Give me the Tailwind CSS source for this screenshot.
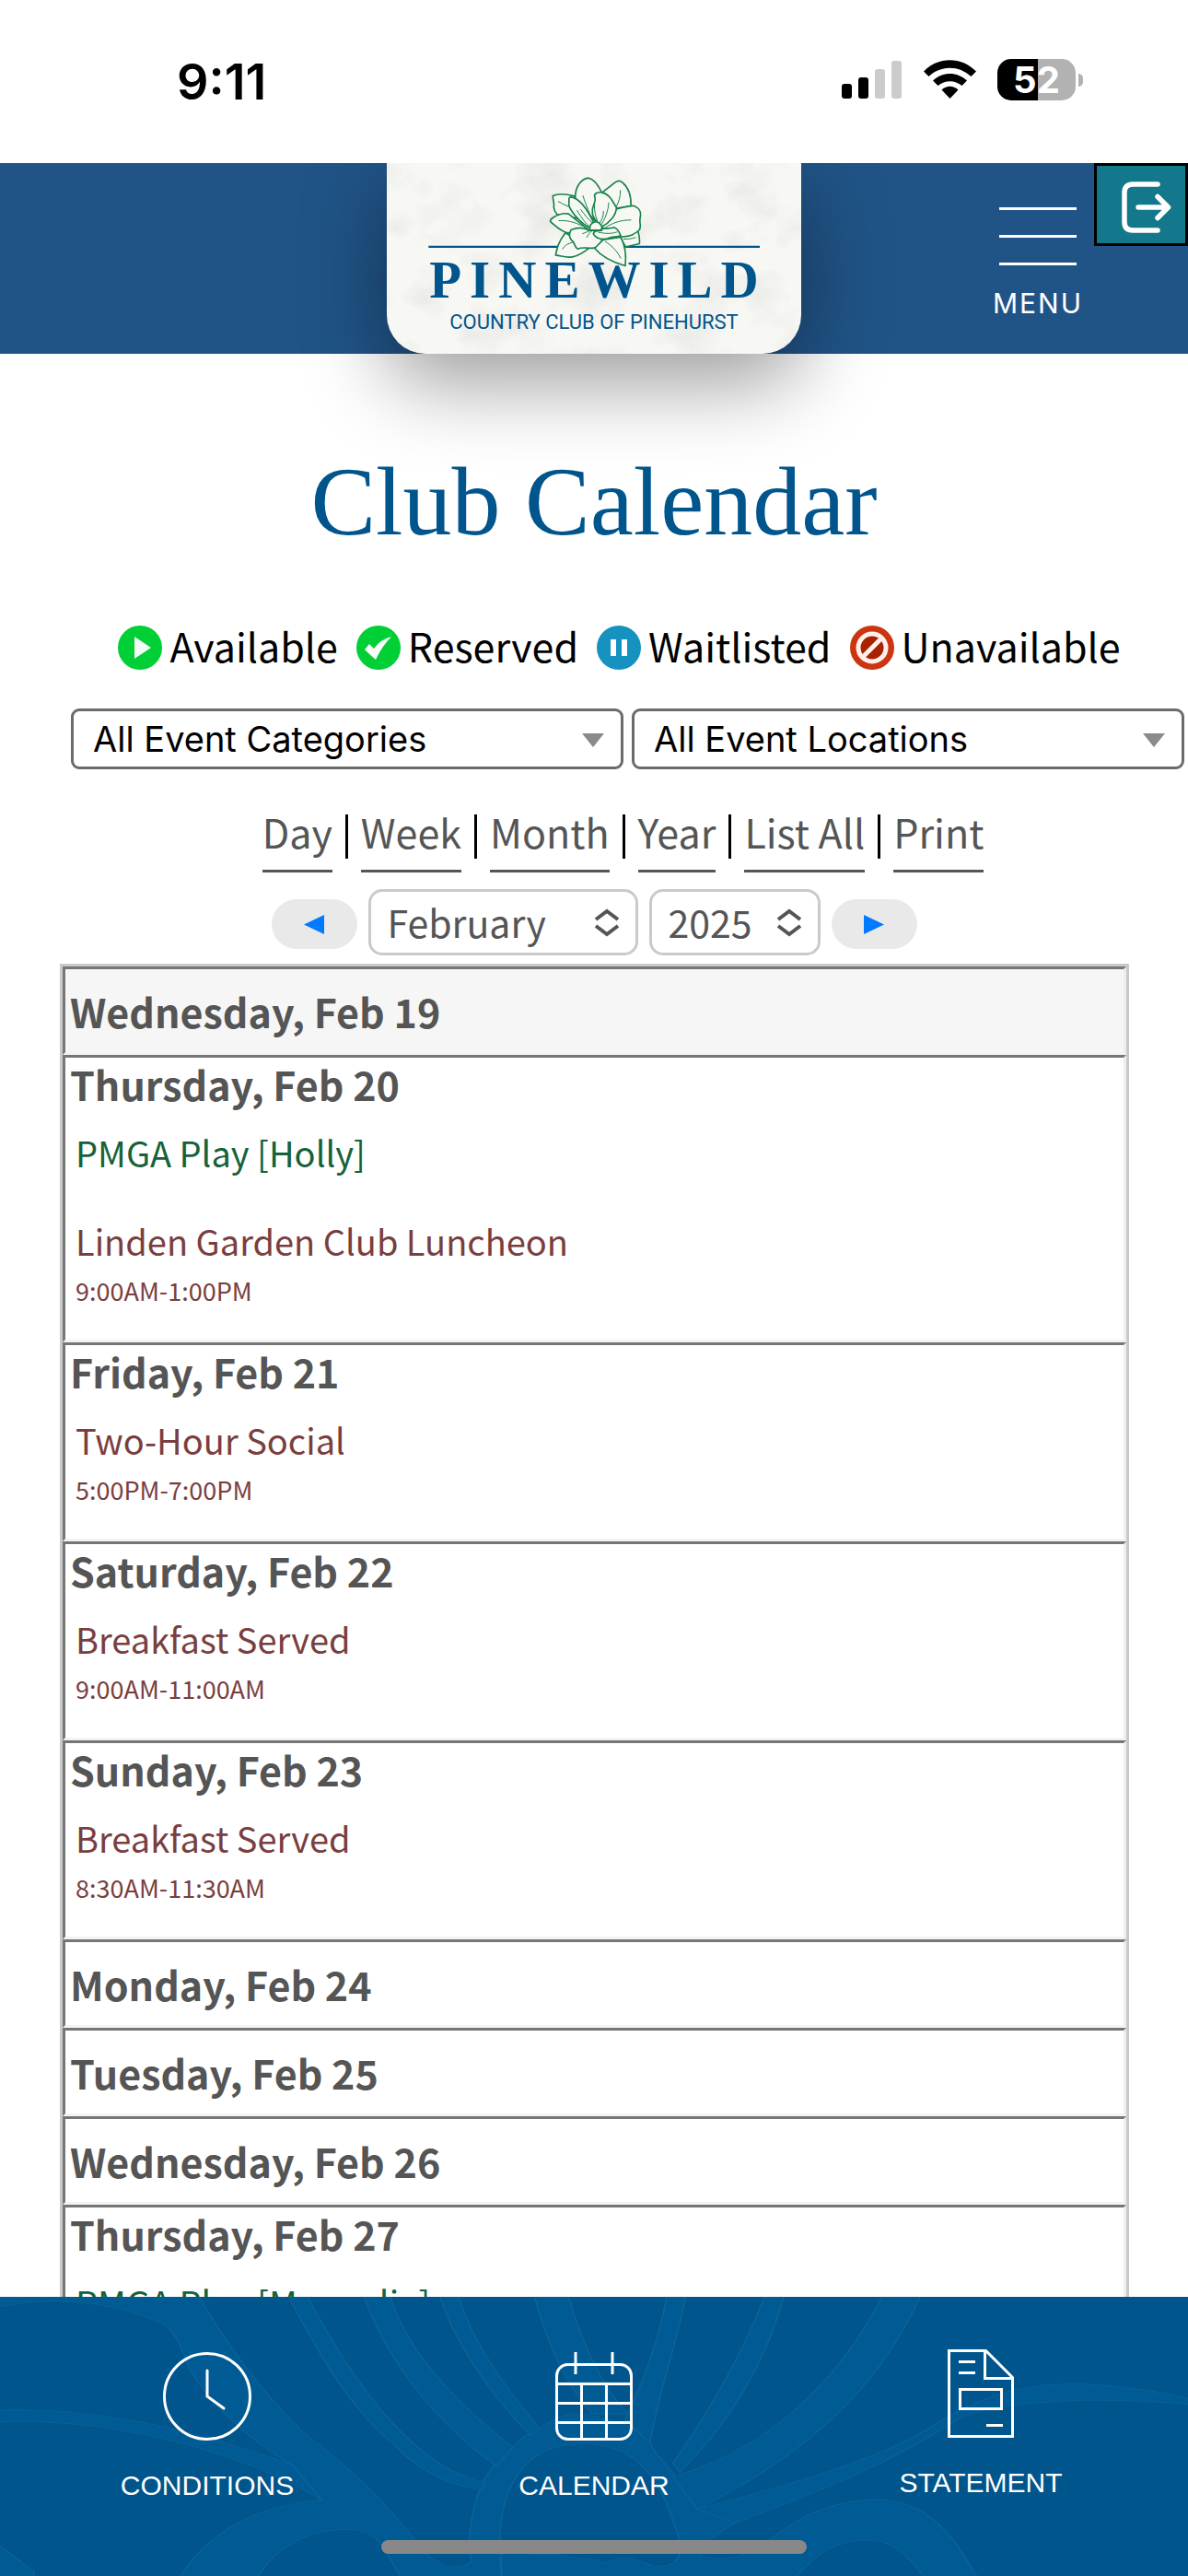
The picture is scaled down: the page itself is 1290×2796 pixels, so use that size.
<!DOCTYPE html>
<html lang="en">
<head>
<meta charset="utf-8">
<title>Club Calendar</title>
<meta name="viewport" content="width=device-width, initial-scale=1">
<script src="https://cdn.jsdelivr.net/npm/@tailwindcss/browser@4"></script>
</head>
<body class="flex h-screen flex-col overflow-hidden bg-white font-['Noto_Sans_CJK_SC','Open_Sans',sans-serif] text-[#555555]">

<!-- Status bar -->
<div class="relative z-10 flex h-[177px] shrink-0 items-start justify-between bg-white pt-[62px] pr-[114px] pl-[192px] font-['Inter',sans-serif] text-black">
  <span class="text-[54px] leading-[54px] font-semibold">9:11</span>
  <div class="flex items-start gap-[23px] pt-[2px]">
    <svg class="mt-[2px] h-[42px] w-[66px]" viewBox="0 0 66 42" aria-hidden="true">
      <rect x="0" y="25" width="11" height="16" rx="3"/><rect x="18" y="18" width="11" height="23" rx="3"/>
      <rect x="36" y="9" width="11" height="32" rx="3" fill="#cbcbcb"/><rect x="54" y="0" width="11" height="41" rx="3" fill="#cbcbcb"/>
    </svg>
    <svg class="mt-[1px] h-[42px] w-[57px]" viewBox="0 0 57 42" aria-hidden="true">
      <path d="M0 12.500C16-4 41-4 57 12.500L51.500 18C38 5.500 19 5.500 5.500 18Z"/>
      <path d="M10 22.500C20.500 12.500 36.500 12.500 47 22.500L41.500 28C34 21.500 23 21.500 15.500 28Z"/>
      <path d="M19.500 32.500C25 27.500 32 27.500 37.500 32.500L28.500 42Z"/>
    </svg>
    <div class="flex items-center gap-[3px]">
      <div class="flex h-[45px] w-[85px] items-center justify-center rounded-[15px] bg-linear-to-r from-black from-52% to-[#b2b2b2] to-52% text-[40px] leading-[45px] font-bold text-white">52</div>
      <div class="h-[14px] w-[5px] rounded-r-full bg-[#b2b2b2]"></div>
    </div>
  </div>
</div>

<!-- Site header -->
<header class="relative flex h-[207px] shrink-0 items-start justify-center bg-[#205487]">
  <a href="#" aria-label="Pinewild Country Club of Pinehurst" class="relative flex h-[207px] w-[450px] flex-col items-center overflow-hidden rounded-b-[42px] bg-[#f7f8f4] pt-[98px] text-[#00558c] shadow-[0_30px_90px_rgba(0,0,0,0.4)]">
    <svg class="absolute inset-0 h-full w-full" viewBox="60 21 1350 620" fill="none" aria-hidden="true">
      <filter id="paper" x="0" y="0" width="100%" height="100%"><feTurbulence type="fractalNoise" baseFrequency="0.006 0.008" numOctaves="4" seed="4"/><feColorMatrix values="0 0 0 0 0.6  0 0 0 0 0.6  0 0 0 0 0.58  1.400 0 0 0 -0.620"/></filter>
      <rect x="60" y="21" width="1350" height="620" filter="url(#paper)" opacity=".5"/>
      <path d="M196 293H1275" stroke="#00558c" stroke-width="7"/>
      <g stroke="#17834a" stroke-width="5" stroke-linejoin="round" stroke-linecap="round" fill="#f7f8f4">
        <path d="M642 248C620 275 615 295 610 320C630 322 640 330 665 326C690 322 710 305 722 295Z"/>
        <path d="M878 242C885 265 884 270 883 283C865 288 850 290 838 293L820 262Z"/>
        <path d="M762 116C775 105 790 95 800 86C812 76 820 76 827 83C845 98 857 120 855 160L808 168Z"/>
        <path d="M672 128C640 120 615 120 601 127C600 140 607 148 604 165C605 175 610 182 615 188L680 200Z"/>
        <path d="M674 140C672 100 690 75 715 69C740 72 755 105 762 120L740 210Z"/>
        <path d="M652 186C635 182 615 190 605 196C597 202 590 205 593 211C610 225 625 242 650 248L720 240Z"/>
        <path d="M808 170C835 165 850 158 865 160C885 168 890 180 885 200C882 215 890 225 883 238C865 255 840 262 820 260L760 230Z"/>
        <path d="M760 228C785 215 808 190 808 165C795 145 785 120 760 116C745 115 735 120 737 130C745 145 728 160 730 175C728 190 738 205 745 212Z"/>
        <path d="M722 232C690 215 660 180 653 158C655 145 650 130 660 131C690 135 715 175 733 212Z"/>
        <path d="M720 240C700 228 680 230 660 238C652 255 655 262 662 272C675 280 670 295 682 300C700 292 715 300 735 297C755 295 762 285 760 270L735 240Z"/>
        <path d="M737 298C760 325 800 345 837 355C840 325 838 290 822 262L765 270Z"/>
        <path d="M722 238C718 220 735 208 748 213C760 222 765 232 757 239Z"/>
        <path d="M760 235C780 232 790 235 800 230C815 235 818 248 822 258C805 262 790 260 780 266C760 272 738 265 733 250C735 240 750 240 760 240Z"/>
        <g stroke-width="3" fill="none">
          <path d="M699 127C710 160 720 185 732 208M821 110C822 130 815 148 808 162M619 146C632 152 640 158 652 162M621 208C645 206 670 212 700 226M680 175C695 200 710 220 722 228M692 172C705 190 718 205 728 214M672 190C690 210 705 222 720 232M737 150C735 175 740 195 746 208M783 150C782 175 770 205 758 222M766 178C766 195 760 205 754 216M855 206C820 205 790 218 770 232M633 300C640 288 650 282 668 278M772 276C795 290 812 310 822 330M870 263C855 268 845 268 832 268M712 262C716 252 722 245 728 242M698 250C708 246 715 244 724 240M810 245C790 252 770 250 750 246"/>
        </g>
      </g>
    </svg>
    <span class="relative pl-[9px] font-['Liberation_Serif',serif] text-[57px] leading-[57px] font-bold tracking-[9px]">PINEWILD</span>
    <span class="relative mt-[6px] font-['Roboto',sans-serif] text-[22px] leading-6">COUNTRY CLUB OF PINEHURST</span>
  </a>
  <button class="absolute top-12 right-[114px] flex flex-col items-center font-['Inter',sans-serif] text-white" type="button">
    <span class="flex flex-col gap-[27px]">
      <span class="h-[3px] w-[84px] bg-white"></span>
      <span class="h-[3px] w-[84px] bg-white"></span>
      <span class="h-[3px] w-[84px] bg-white"></span>
    </span>
    <span class="mt-[23px] text-[30px] leading-9 tracking-[2px]">MENU</span>
  </button>
  <button type="button" aria-label="Log out" class="absolute top-0 right-0 flex h-[90px] w-[102px] items-center justify-center border-[3px] border-black bg-[#14788c] pt-[6px] pl-[12px]">
    <svg class="h-[56px] w-[54px]" viewBox="0 0 54 56" fill="none" stroke="#fff" stroke-width="5.500" stroke-linecap="round" stroke-linejoin="round" aria-hidden="true"><path d="M39 3H12Q3 3 3 12V44Q3 53 12 53H39M18 28H50M39 16.500L50.500 28L39 39.500"/></svg>
  </button>
</header>

<!-- Calendar -->
<main class="min-h-0 flex-1 overflow-hidden">
  <h1 class="mt-[101px] text-center font-['Liberation_Serif',serif] text-[106px] leading-[120px] text-[#00558c]">Club Calendar</h1>

  <ul class="mt-[62px] ml-[55px] flex h-[66px] items-center justify-center gap-5 text-[43px] leading-[66px] text-black">
    <li class="flex items-center gap-2">
      <svg class="mt-[6px] h-12 w-12" viewBox="0 0 48 48" aria-hidden="true"><circle cx="24" cy="24" r="24" fill="#00cf35"/><path d="M18 12L36 24L18 36Z" fill="#f2fbf4"/></svg>Available</li>
    <li class="flex items-center gap-2">
      <svg class="mt-[6px] h-12 w-12" viewBox="0 0 48 48" aria-hidden="true"><circle cx="24" cy="24" r="24" fill="#00cf35"/><path d="M9 26L14 20L19 25Q26 15 38 12Q28 22 21 37Q15 32 9 26Z" fill="#f8fdf9"/></svg>Reserved</li>
    <li class="flex items-center gap-2">
      <svg class="mt-[6px] h-12 w-12" viewBox="0 0 48 48" aria-hidden="true"><circle cx="24" cy="24" r="24" fill="#1592c0"/><path d="M15 15H21V33H15ZM27 15H33V33H27Z" fill="#fff"/></svg>Waitlisted</li>
    <li class="flex items-center gap-2">
      <svg class="mt-[6px] h-12 w-12" viewBox="0 0 48 48" fill="none" aria-hidden="true"><circle cx="24" cy="24" r="24" fill="#cb3510"/><circle cx="24" cy="24" r="15" fill="#a82200" stroke="#fff0ec" stroke-width="5"/><path d="M15 33L33 15" stroke="#fff0ec" stroke-width="5"/></svg>Unavailable</li>
  </ul>

  <div class="mt-[36px] ml-[77px] flex gap-[9px] pr-1 font-['Inter',sans-serif] text-[38px] text-black">
    <div class="relative flex-1">
      <select aria-label="Event category" class="h-[66px] w-full appearance-none rounded-[9px] border-[3px] border-[#6b6b6b] bg-white pl-[21px]"><option>All Event Categories</option></select>
      <svg class="pointer-events-none absolute top-[27px] right-[21px] h-[15px] w-6" viewBox="0 0 24 15" aria-hidden="true"><path d="M0 0H24L12 15Z" fill="#8a8a8a"/></svg>
    </div>
    <div class="relative flex-1">
      <select aria-label="Event location" class="h-[66px] w-full appearance-none rounded-[9px] border-[3px] border-[#6b6b6b] bg-white pl-[21px]"><option>All Event Locations</option></select>
      <svg class="pointer-events-none absolute top-[27px] right-[21px] h-[15px] w-6" viewBox="0 0 24 15" aria-hidden="true"><path d="M0 0H24L12 15Z" fill="#8a8a8a"/></svg>
    </div>
  </div>

  <nav aria-label="Calendar view" class="mt-[25px] ml-[63px] flex justify-center gap-[14px] text-[43px] leading-[84px]">
    <a href="#" class="border-b-[3px] border-[#555555]">Day</a><span class="mt-6 mb-[15px] w-[3px] bg-black"></span>
    <a href="#" class="border-b-[3px] border-[#555555]">Week</a><span class="mt-6 mb-[15px] w-[3px] bg-black"></span>
    <a href="#" class="border-b-[3px] border-[#555555]">Month</a><span class="mt-6 mb-[15px] w-[3px] bg-black"></span>
    <a href="#" class="border-b-[3px] border-[#555555]">Year</a><span class="mt-6 mb-[15px] w-[3px] bg-black"></span>
    <a href="#" class="border-b-[3px] border-[#555555]">List All</a><span class="mt-6 mb-[15px] w-[3px] bg-black"></span>
    <a href="#" class="border-b-[3px] border-[#555555]">Print</a>
  </nav>

  <div class="mt-[18px] flex items-center justify-center gap-3 text-[41px]">
    <button type="button" aria-label="Previous month" class="mt-1 flex h-[54px] w-[93px] items-center justify-center rounded-full bg-[#e9e9e9]"><svg class="h-[21px] w-[22px]" viewBox="0 0 22 21" aria-hidden="true"><path d="M0 10.500L22 0V21Z" fill="#007aff"/></svg></button>
    <div class="relative">
      <select aria-label="Month" class="h-[72px] w-[293px] appearance-none rounded-[15px] border-[3px] border-[#cacaca] bg-white pl-[18px]"><option>February</option></select>
      <svg class="pointer-events-none absolute top-[21px] right-[20px] h-[31px] w-[28px]" viewBox="0 0 28 31" fill="none" stroke="#555" stroke-width="4" aria-hidden="true"><path d="M2 12L14 3L26 12M2 19L14 28L26 19"/></svg>
    </div>
    <div class="relative">
      <select aria-label="Year" class="h-[72px] w-[186px] appearance-none rounded-[15px] border-[3px] border-[#cacaca] bg-white pl-[18px]"><option>2025</option></select>
      <svg class="pointer-events-none absolute top-[21px] right-[20px] h-[31px] w-[28px]" viewBox="0 0 28 31" fill="none" stroke="#555" stroke-width="4" aria-hidden="true"><path d="M2 12L14 3L26 12M2 19L14 28L26 19"/></svg>
    </div>
    <button type="button" aria-label="Next month" class="mt-1 flex h-[54px] w-[93px] items-center justify-center rounded-full bg-[#e9e9e9]"><svg class="h-[21px] w-[22px]" viewBox="0 0 22 21" aria-hidden="true"><path d="M22 10.500L0 0V21Z" fill="#007aff"/></svg></button>
  </div>

  <div class="mt-[9px] pr-16 pl-[65px]">
  <table id="days" class="w-full border-separate border-spacing-0 border-[3px] border-[#c9c9c9]">
    <tbody></tbody>
  </table>
  </div>
</main>

<!-- Bottom navigation -->
<footer class="relative h-[303px] shrink-0 overflow-hidden bg-[#00558c] font-['Liberation_Sans',Arial,sans-serif] text-[30px] leading-9 text-white">
  <svg class="absolute inset-0 h-full w-full" viewBox="0 339 1568 909" preserveAspectRatio="none" fill="#005b94" stroke="#12659b" stroke-width="1.500" aria-hidden="true">
    <path d="M262 335C300 500 350 660 400 780C470 910 510 1010 560 1170C585 1230 615 1225 622 1200C615 1120 625 1000 640 930C655 870 665 850 677 830C690 795 700 775 712 768C730 735 745 715 775 722C800 740 835 745 858 815C865 850 875 875 888 910L920 1030C960 1020 990 1010 1020 1000C1010 1030 990 1060 970 1075L935 1130C910 1180 925 1195 960 1190C1020 1175 1040 1010 1155 998C1230 1000 1260 1130 1290 1252H1220C1200 1190 1180 1130 1145 1130C1100 1135 1080 1170 1050 1252H530C510 1190 505 1100 465 1097C400 1090 360 1170 340 1252H238C270 1120 330 1020 425 1000L385 885C310 780 255 620 245 540C235 480 230 450 215 428L160 335Z"/>
    <path d="M425 1000C300 820 130 730 -5 748V708C120 695 240 760 385 885Z"/>
    <path d="M-5 375C60 335 150 350 215 428L262 335H-5Z" stroke="none"/>
    <path d="M-5 375C60 335 150 350 215 428" fill="#00558c"/>
    <path d="M380 335C420 520 460 700 520 820C550 900 590 950 635 968L640 945C540 890 460 590 405 335Z"/>
    <path d="M480 335C510 540 570 740 655 890L677 830C600 680 535 510 515 335Z"/>
    <path d="M580 335C605 520 660 690 700 790L712 768C670 640 625 500 605 335Z"/>
    <path d="M705 335C720 470 745 620 782 722H830C795 640 765 470 750 335Z"/>
    <path d="M880 335C870 480 850 610 825 740L858 815C870 640 895 480 905 335Z"/>
    <path d="M1010 335C980 520 940 700 888 880L897 910C960 760 1010 560 1035 335Z"/>
    <path d="M1165 335C1110 600 1020 830 888 925L920 1030C1060 860 1160 640 1215 335Z"/>
    <path d="M920 1030C1080 930 1180 840 1230 760C1280 680 1340 620 1410 623C1450 620 1520 640 1573 672V690C1440 660 1320 680 1270 730C1180 870 1110 950 970 1075Z"/>
    <path d="M662 1252C650 1000 680 820 768 817C860 815 880 1010 897 1130C900 1200 890 1220 860 1215C840 1190 820 1180 800 1205C770 1180 760 1200 740 1175C720 1180 700 1180 662 1160Z" fill="#00558c"/>
    <path d="M-5 1140L45 1235V1252H-5Z"/>
  </svg>
  <nav aria-label="Main" class="relative grid grid-cols-3 px-[15px] pt-[57px] text-center">
    <a href="#" class="flex flex-col items-center gap-[31px] pt-[3px]">
      <svg class="h-24 w-24" viewBox="0 0 96 96" fill="none" stroke="#fff" stroke-width="3" stroke-linecap="round" aria-hidden="true"><circle cx="48" cy="48" r="46.500"/><path d="M48 20V48L66 61"/></svg>CONDITIONS</a>
    <a href="#" class="flex flex-col items-center gap-[31px] pt-[3px]">
      <svg class="h-24 w-[84px]" viewBox="0 0 84 96" fill="none" stroke="#fff" stroke-width="3" aria-hidden="true"><rect x="1.500" y="13.500" width="81" height="81" rx="12"/><path d="M22 0V24M62 0V24M1 34.500H83M1 55.500H83M1 76.500H83M28.500 35V95M55.500 35V95"/></svg>CALENDAR</a>
    <a href="#" class="flex flex-col items-center gap-[31px]">
      <svg class="h-24 w-[72px]" viewBox="0 0 72 96" fill="none" stroke="#fff" stroke-width="3" aria-hidden="true"><path d="M1.500 1.500H41.500L70.500 30.500V94.500H1.500ZM40.500 1.500V31.500H71M12 13.500H30M12 25.500H30M13.500 43.500H58.500V64.500H13.500ZM42 82.500H60"/></svg>STATEMENT</a>
  </nav>
  <div class="absolute inset-x-0 bottom-6 mx-auto h-[15px] w-[462px] rounded-full bg-[#888888]"></div>
</footer>

<script>
  const GREEN = 'text-[#15623a]';
  const RED = 'text-[#7a3e3e]';
  const days = [
    { date: 'Wednesday, Feb 19', today: true, events: [] },
    { date: 'Thursday, Feb 20', events: [['PMGA Play [Holly]', '', GREEN], ['Linden Garden Club Luncheon', '9:00AM-1:00PM', RED]] },
    { date: 'Friday, Feb 21', events: [['Two-Hour Social', '5:00PM-7:00PM', RED]] },
    { date: 'Saturday, Feb 22', events: [['Breakfast Served', '9:00AM-11:00AM', RED]] },
    { date: 'Sunday, Feb 23', events: [['Breakfast Served', '8:30AM-11:30AM', RED]] },
    { date: 'Monday, Feb 24', events: [] },
    { date: 'Tuesday, Feb 25', events: [] },
    { date: 'Wednesday, Feb 26', events: [] },
    { date: 'Thursday, Feb 27', events: [['PMGA Play [Magnolia]', '', GREEN]] },
  ];
  document.querySelector('#days tbody').innerHTML = days.map(d => `
    <tr><td class="border-[3px] border-t-[#767676] border-r-[#eeeeee] border-b-[#f3f3f3] border-l-[#767676] px-[5px] ${d.today ? 'bg-[#f6f6f6]' : ''} ${d.events.length ? 'pb-[34px]' : 'py-[17px]'}">
      <h2 class="text-[43px] leading-[56px] font-bold">${d.date}</h2>
      ${d.events.map(([name, time, tone]) => `
      <a href="#" class="block h-24 pl-[6px] ${tone} first-of-type:mt-[24px]">
        <span class="block text-[38px] leading-[45px]">${name}</span>
        <span class="mt-[14px] block text-[27px] leading-[36px]">${time}</span>
      </a>`).join('')}
    </td></tr>`).join('');
</script>
</body>
</html>
